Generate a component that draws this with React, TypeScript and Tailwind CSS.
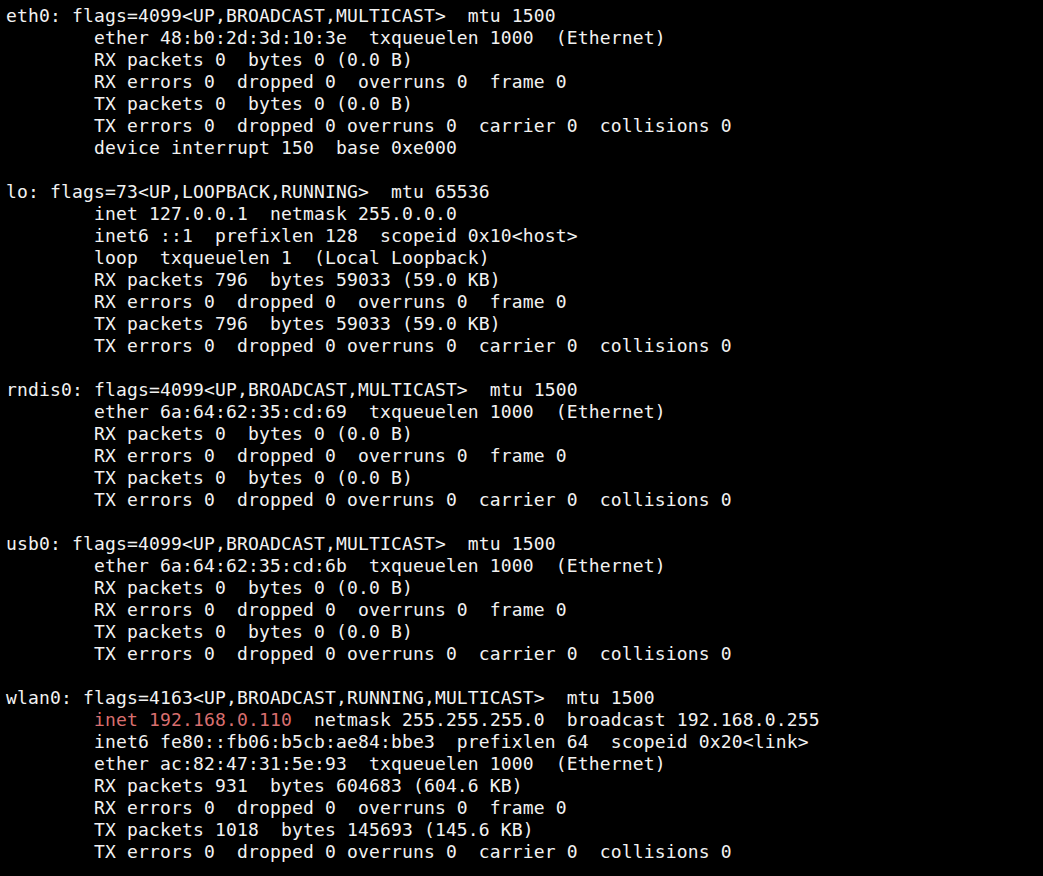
const lines: string[] = [
  "eth0: flags=4099<UP,BROADCAST,MULTICAST>  mtu 1500",
  "        ether 48:b0:2d:3d:10:3e  txqueuelen 1000  (Ethernet)",
  "        RX packets 0  bytes 0 (0.0 B)",
  "        RX errors 0  dropped 0  overruns 0  frame 0",
  "        TX packets 0  bytes 0 (0.0 B)",
  "        TX errors 0  dropped 0 overruns 0  carrier 0  collisions 0",
  "        device interrupt 150  base 0xe000",
  "",
  "lo: flags=73<UP,LOOPBACK,RUNNING>  mtu 65536",
  "        inet 127.0.0.1  netmask 255.0.0.0",
  "        inet6 ::1  prefixlen 128  scopeid 0x10<host>",
  "        loop  txqueuelen 1  (Local Loopback)",
  "        RX packets 796  bytes 59033 (59.0 KB)",
  "        RX errors 0  dropped 0  overruns 0  frame 0",
  "        TX packets 796  bytes 59033 (59.0 KB)",
  "        TX errors 0  dropped 0 overruns 0  carrier 0  collisions 0",
  "",
  "rndis0: flags=4099<UP,BROADCAST,MULTICAST>  mtu 1500",
  "        ether 6a:64:62:35:cd:69  txqueuelen 1000  (Ethernet)",
  "        RX packets 0  bytes 0 (0.0 B)",
  "        RX errors 0  dropped 0  overruns 0  frame 0",
  "        TX packets 0  bytes 0 (0.0 B)",
  "        TX errors 0  dropped 0 overruns 0  carrier 0  collisions 0",
  "",
  "usb0: flags=4099<UP,BROADCAST,MULTICAST>  mtu 1500",
  "        ether 6a:64:62:35:cd:6b  txqueuelen 1000  (Ethernet)",
  "        RX packets 0  bytes 0 (0.0 B)",
  "        RX errors 0  dropped 0  overruns 0  frame 0",
  "        TX packets 0  bytes 0 (0.0 B)",
  "        TX errors 0  dropped 0 overruns 0  carrier 0  collisions 0",
  "",
  "wlan0: flags=4163<UP,BROADCAST,RUNNING,MULTICAST>  mtu 1500",
  "@@inet 192.168.0.110",
  "        inet6 fe80::fb06:b5cb:ae84:bbe3  prefixlen 64  scopeid 0x20<link>",
  "        ether ac:82:47:31:5e:93  txqueuelen 1000  (Ethernet)",
  "        RX packets 931  bytes 604683 (604.6 KB)",
  "        RX errors 0  dropped 0  overruns 0  frame 0",
  "        TX packets 1018  bytes 145693 (145.6 KB)",
  "        TX errors 0  dropped 0 overruns 0  carrier 0  collisions 0",
];

function App() {
  return (
    <div className="bg-black text-[#f2f2f2] w-[1043px] h-[876px] overflow-hidden pt-[5px] pl-[6px] font-['DejaVu_Sans_Mono',monospace] text-[18px] tracking-[0.16px] leading-[22px]">
      {lines.map((line, i) =>
        line.startsWith("@@") ? (
          <div key={i} className="whitespace-pre h-[22px]">
            {"        "}
            <span className="text-[#d96f6f]">inet 192.168.0.110</span>
            {"  netmask 255.255.255.0  broadcast 192.168.0.255"}
          </div>
        ) : (
          <div key={i} className="whitespace-pre h-[22px]">
            {line}
          </div>
        )
      )}
    </div>
  );
}

export default App;
